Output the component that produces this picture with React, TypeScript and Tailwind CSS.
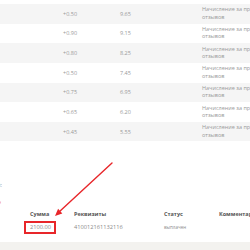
const rows = [
  { delta: "+0.50", total: "9.65" },
  { delta: "+0.90", total: "9.15" },
  { delta: "+0.80", total: "8.25" },
  { delta: "+0.50", total: "7.45" },
  { delta: "+0.75", total: "6.95" },
  { delta: "+0.65", total: "6.20" },
  { delta: "+0.45", total: "5.55" },
];

export default function App() {
  return (
    <div className="relative w-[250px] h-[250px] overflow-hidden bg-white font-['Open_Sans',sans-serif] text-[#9a9a9a]">
      <div className="w-[340px]">
        <div className="h-[4px]" />

        {/* Transactions table */}
        {rows.map((row, i) => (
          <div
            key={i}
            className={`flex items-center h-[19.65px] text-[5.5px] ${
              i % 2 === 0 ? "bg-[#f5f5f5]" : "bg-white"
            }`}
          >
            <div className="w-[63px]" />
            <div className="w-[57px]">{row.delta}</div>
            <div className="w-[82px]">{row.total}</div>
            <div className="leading-[7.5px]">
              <div>Начисление за проверку</div>
              <div>отзывов</div>
            </div>
          </div>
        ))}

        <div className="h-[37.5px]" />

        <div className="h-[12px] leading-[12px] text-[5.5px] text-[#888] -ml-[3px]">й:</div>
        <div className="h-[5px]" />
        <div className="h-[12px] leading-[12px] text-[6px] font-semibold text-[#f08040] -ml-[2.5px]">е</div>

        {/* Payouts table */}
        <div className="flex items-center h-[13px] text-[5.5px] font-bold text-[#555] pl-[24px]">
          <div className="w-[50px] pl-[6px]">Сумма</div>
          <div className="w-[90px]">Реквизиты</div>
          <div className="w-[55px]">Статус</div>
          <div>Комментарий</div>
        </div>
        <div className="flex items-center h-[13px] text-[5.7px] text-[#8a8a8a] pl-[24px]">
          <div className="w-[50px]">
            <div className="w-[32px] h-[13px] border-2 border-[#e8262a] pl-[4px] flex items-center">
              2100.00
            </div>
          </div>
          <div className="w-[90px]">410012161132116</div>
          <div className="w-[55px] text-[4.5px]">выплачен</div>
        </div>

        <div className="h-[8px]" />
        <div className="h-[10px] bg-[#f3f2ef]" />
      </div>

      {/* Annotation arrow */}
      <svg className="absolute inset-0" width="250" height="250" viewBox="0 0 250 250">
        <line x1="112" y1="163" x2="59" y2="212" stroke="#e8262a" strokeWidth="1.4" strokeLinecap="round" />
        <polygon points="55,216 62.3,213.4 58.1,208.8" fill="#e8262a" />
      </svg>
    </div>
  );
}
